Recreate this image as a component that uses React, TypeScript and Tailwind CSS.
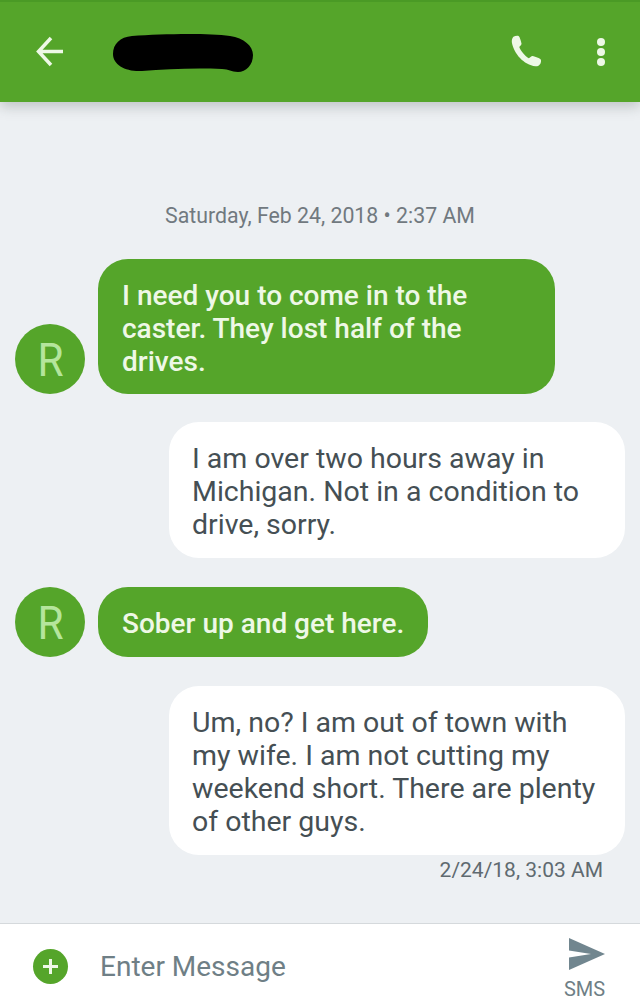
const PhoneIcon = () => (
  <svg width="39" height="39" viewBox="0 0 36 36" fill="#eef8e6">
    <path d="M5 3.500c1.600-1 4-1.400 5-.6 1 .9 2.300 5.500 2.500 7 .1 1-1.500 2.300-2.100 3.100 1.300 3.500 4.900 8 8.800 10.400.9-.6 2.500-2.300 3.600-2.100 1.600.3 5.500 1.700 7 2.800 1 .8.900 2.700.1 4.200-.9 1.600-2.600 2.500-4.500 2.400C14.500 29.500 5.500 19 3.600 9c-.3-2 .1-4.300 1.400-5.500z" />
  </svg>
)

const SendIcon = () => (
  <svg className="ml-[5px]" width="38" height="34" viewBox="0 0 38 34" fill="#71868f">
    <path d="M1 1l36 16L1 33v-12.500l22-3.500-22-3.500z" />
  </svg>
)

const Avatar = () => (
  <div className="flex h-[70px] w-[70px] shrink-0 items-center justify-center rounded-full bg-[#55a52a] text-[#b5e59c]">
    <span className="scale-x-[0.9] text-[47px] leading-none">R</span>
  </div>
)

const Received = ({ children, className }: { children: React.ReactNode; className: string }) => (
  <div className="flex items-end gap-[13px] pl-[15px]">
    <Avatar />
    <div
      className={`rounded-[30px] bg-[#55a52a] pl-[24px] pt-[20px] pb-[16px] text-[28px] font-medium text-[#eef8e6] ${className}`}
    >
      {children}
    </div>
  </div>
)

const Sent = ({ children }: { children: React.ReactNode }) => (
  <div className="ml-[169px] w-[456px] rounded-[30px] bg-white pl-[23px] pr-[10px] pt-[20px] pb-[17px] text-[#454f54]">
    {children}
  </div>
)

export default function App() {
  return (
    <div className="flex h-[1004px] w-[640px] flex-col overflow-hidden bg-[#edf0f3] font-['Roboto',sans-serif] text-[28.5px] leading-[33px]">
      {/* Header */}
      <header className="relative flex h-[102px] shrink-0 items-center border-t-2 border-[#4a9a25] bg-[#55a52a] pl-[36px] pr-[35px] shadow-[0_5px_12px_rgba(90,100,100,0.3)]">
        <svg width="28" height="32" viewBox="0 0 28 32" fill="none" stroke="#eef8e6" strokeWidth="3.500">
          <path d="M27 15.500H3M15 2L2.500 15.500 15 29" />
        </svg>
        <svg className="ml-[48px] mt-[4px]" width="142" height="40" viewBox="0 0 142 40" fill="#000">
          <path d="M20 2C50 0 95-1 118 2c14 2 23 10 23 19 0 10-7 17-15 17-7 0-9-3-16-3-28-1-55 0-80 2C14 38 1 31 1 20 1 10 8 3 20 2z" />
        </svg>
        <div className="ml-auto flex items-center gap-[50px]">
          <PhoneIcon />
          <div className="flex flex-col gap-[2px]">
            <span className="h-[8px] w-[8px] rounded-full bg-[#eef8e6]" />
            <span className="h-[8px] w-[8px] rounded-full bg-[#eef8e6]" />
            <span className="h-[8px] w-[8px] rounded-full bg-[#eef8e6]" />
          </div>
        </div>
      </header>

      {/* Messages */}
      <main className="flex flex-1 flex-col">
        <p className="mt-[101px] text-center text-[21.300px] leading-[26px] text-[#71797f]">
          Saturday, Feb 24, 2018 • 2:37 AM
        </p>
        <div className="mt-[30px] flex flex-col gap-[28px]">
          <Received className="w-[457px]">
            I need you to come in to the
            <br />
            caster. They lost half of the
            <br />
            drives.
          </Received>
          <Sent>
            I am over two hours away in
            <br />
            Michigan. Not in a condition to
            <br />
            drive, sorry.
          </Sent>
          <div className="my-px">
            <Received className="w-[330px] pb-[17px]">Sober up and get here.</Received>
          </div>
          <Sent>
            Um, no? I am out of town with
            <br />
            my wife. I am not cutting my
            <br />
            weekend short. There are plenty
            <br />
            of other guys.
          </Sent>
        </div>
        <p className="mt-[2px] pr-[37px] text-right text-[21px] leading-[26px] text-[#5f6a70]">2/24/18, 3:03 AM</p>
      </main>

      {/* Footer */}
      <footer className="flex h-[81px] shrink-0 items-center border-t border-[#d5d9dc] bg-white pl-[33px] pr-[34px]">
        <div className="mt-[4px] flex h-[35px] w-[35px] items-center justify-center rounded-full bg-[#55a52a]">
          <svg width="19" height="19" viewBox="0 0 19 19" stroke="#eef8e6" strokeWidth="3">
            <path d="M9.500 2v15M2 9.500h15" />
          </svg>
        </div>
        <span className="ml-[32px] mt-[5px] text-[28px] text-[#6f7f86]">Enter Message</span>
        <div className="ml-auto flex flex-col items-center gap-[7px] self-start pt-[13px]">
          <SendIcon />
          <span className="text-[20px] leading-[22px] text-[#6f7f86]">SMS</span>
        </div>
      </footer>
    </div>
  )
}
